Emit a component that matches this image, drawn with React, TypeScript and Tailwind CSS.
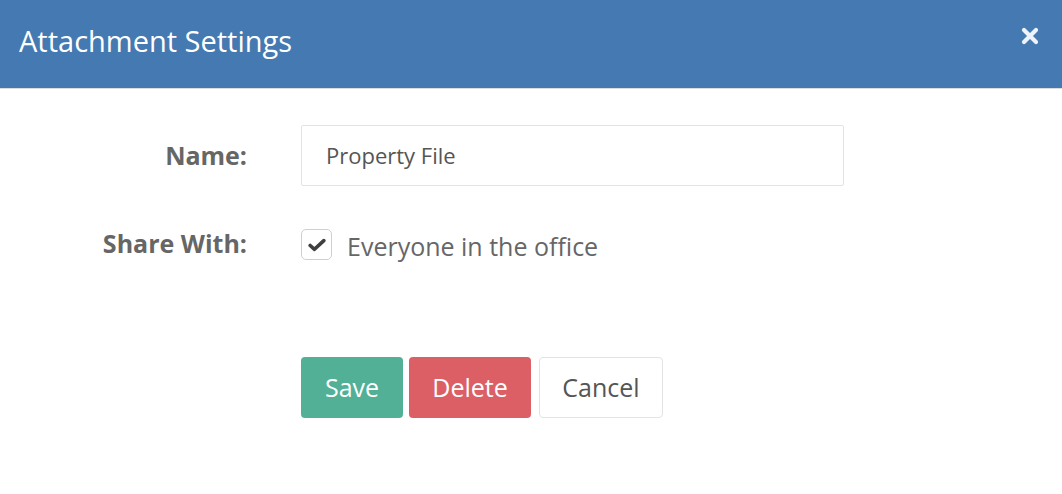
import React from 'react';

const font = { fontFamily: '"Open Sans", "Noto Sans", sans-serif' };

export default function App() {
  return (
    <div className="w-[1062px] h-[494px] bg-white overflow-hidden" style={font}>
      <div className="h-[89px] bg-[#4479b1] border-b border-[#dcdcdc] flex items-center justify-between pl-[19px] pr-[22px]">
        <h1 className="text-[29px] text-white leading-none -mt-[7px]">Attachment Settings</h1>
        <svg width="20" height="20" viewBox="0 0 20 20" className="-mt-[16px]">
          <path d="M4 4 L16 16 M16 4 L4 16" stroke="#eef3fa" strokeWidth="4.2" strokeLinecap="round" />
        </svg>
      </div>

      <div className="pt-[36px] grid grid-cols-[247px_543px] gap-x-[54px] items-center">
        <label className="text-right text-[25px] font-bold text-[#666] leading-none">Name:</label>
        <div className="h-[61px] border border-[#e3e3e3] rounded-[2px] flex items-center px-[24px] text-[22px] text-[#555]">
          Property File
        </div>

        <label className="text-right text-[25px] font-bold text-[#666] mt-[43px] leading-none -translate-y-[1px]">Share With:</label>
        <div className="mt-[43px] flex items-center gap-[15px]">
          <div className="w-[31px] h-[31px] border border-[#cfcfcf] rounded-[5px] flex items-center justify-center">
            <svg width="18" height="14" viewBox="0 0 18 14">
              <path d="M2.2 7.5 L6.5 11.3 L15.8 2.6" fill="none" stroke="#3f3f3f" strokeWidth="3.6" strokeLinecap="round" strokeLinejoin="round" />
            </svg>
          </div>
          <span className="text-[25px] text-[#666] leading-none translate-y-[2px]">Everyone in the office</span>
        </div>

        <div />
        <div className="mt-[97px] flex gap-[6px]">
          <button className="w-[102px] h-[61px] rounded-[4px] bg-[#52b096] text-white text-[25px]">Save</button>
          <button className="w-[122px] h-[61px] rounded-[4px] bg-[#dd5f66] text-white text-[25px]">Delete</button>
          <button className="ml-[2px] w-[124px] h-[61px] rounded-[4px] border border-[#e3e3e3] bg-white text-[#555] text-[25px]">Cancel</button>
        </div>
      </div>
    </div>
  );
}
